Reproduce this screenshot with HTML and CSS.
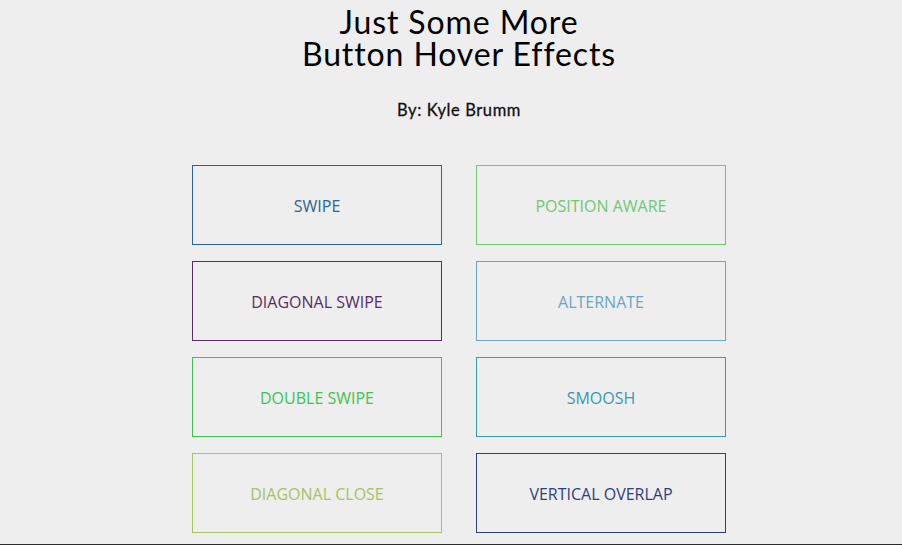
FILE: index.html
```html
<!DOCTYPE html>
<html>
<head>
<meta charset="utf-8">
<link rel="stylesheet" href="styles.css">
</head>
<body>
<div class="page">
  <h1 class="title">Just Some More<br>Button Hover Effects</h1>
  <p class="byline">By: Kyle Brumm</p>
  <div class="grid">
    <a class="btn swipe">Swipe</a>
    <a class="btn aware">Position Aware</a>
    <a class="btn dswipe">Diagonal Swipe</a>
    <a class="btn alternate">Alternate</a>
    <a class="btn double">Double Swipe</a>
    <a class="btn smoosh">Smoosh</a>
    <a class="btn dclose">Diagonal Close</a>
    <a class="btn overlap">Vertical Overlap</a>
  </div>
</div>
</body>
</html>
```
FILE: styles.css
```css
html, body {
  margin: 0;
  padding: 0;
}
body {
  background: #eeeeee;
  min-height: 100vh;
  box-sizing: border-box;
  border-bottom: 1px solid #2b2b2b;
  overflow: hidden;
}
.page {
  padding-left: 16px;
  display: flex;
  flex-direction: column;
  align-items: center;
}
.title {
  margin: 6px 0 0;
  font-family: Lato, sans-serif;
  font-weight: 400;
  font-size: 32px;
  line-height: 32px;
  color: #000;
  text-align: center;
  letter-spacing: 0.9px;
}
.byline {
  margin: 30px 0 0;
  font-family: Lato, sans-serif;
  font-weight: 400;
  font-size: 16.5px;
  line-height: 20px;
  color: #111;
  letter-spacing: 0.6px;
  -webkit-text-stroke: 0.3px #111;
}
.grid {
  margin-top: 45px;
  display: grid;
  grid-template-columns: 250px 250px;
  column-gap: 34px;
  row-gap: 16px;
}
.btn {
  box-sizing: border-box;
  height: 80px;
  padding-top: 2px;
  border: 1px solid currentColor;
  display: flex;
  align-items: center;
  justify-content: center;
  font-family: "Open Sans", sans-serif;
  font-size: 16px;
  text-transform: uppercase;
}
.swipe { color: #2a6599; }
.aware { color: #6ec96f; }
.dswipe { color: #5d2b63; }
.alternate { color: #6aa6bf; }
.double { color: #3ec44f; }
.smoosh { color: #3a98b3; }
.dclose { color: #a2c562; }
.overlap { color: #2c3e7c; }
```
